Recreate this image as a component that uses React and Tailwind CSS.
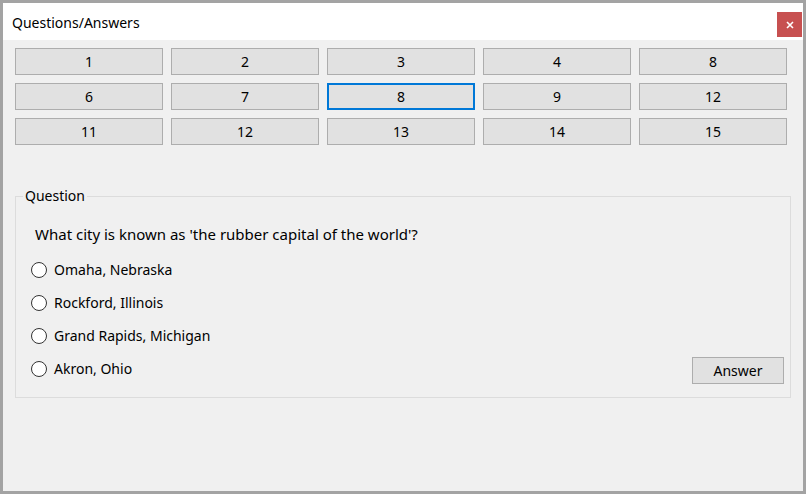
import { useState } from 'react'

const NUMBERS = [1, 2, 3, 4, 8, 6, 7, 8, 9, 12, 11, 12, 13, 14, 15]

const OPTIONS = ['Omaha, Nebraska', 'Rockford, Illinois', 'Grand Rapids, Michigan', 'Akron, Ohio']

export default function App() {
  const [selected, setSelected] = useState(7)
  const [choice, setChoice] = useState(null)

  return (
    <div className="w-[806px] h-[494px] border-[3px] border-[#a3a3a3] bg-[#f0f0f0] flex flex-col text-[#000] font-['Segoe_UI','Noto_Sans',sans-serif]">
      <div className="h-[37px] bg-white flex items-start justify-between">
        <div className="pl-[9px] pt-[10px] text-[14px] leading-[20px]">Questions/Answers</div>
        <button className="mt-[9px] mr-[1px] w-[25px] h-[25px] bg-[#c75050] text-white flex items-center justify-center">
          <svg width="8" height="8" viewBox="0 0 8 8">
            <path d="M1 1L7 7M7 1L1 7" stroke="white" strokeWidth="1.6" />
          </svg>
        </button>
      </div>

      <div className="flex-1 pl-[12px] pt-[8px]">
        <div className="grid grid-cols-[repeat(5,148px)] gap-[8px]">
          {NUMBERS.map((n, i) => (
            <button key={i} onClick={() => setSelected(i)}
              className={`h-[27px] bg-[#e1e1e1] text-[14px] leading-none ${
                selected === i ? 'border-2 border-[#0078d7]' : 'border border-[#adadad]'
              }`}>
              {n}
            </button>
          ))}
        </div>

        <fieldset className="mt-[42px] w-[776px] h-[211px] border border-[#dcdcdc] relative">
          <legend className="ml-[7px] px-[2px] text-[14px] leading-[18px]">Question</legend>
          <div className="pl-[19px] pt-[19px] text-[15px] leading-[20px]">
            What city is known as 'the rubber capital of the world'?
          </div>
          <div className="flex items-end justify-between pr-[6px]">
            <div className="flex flex-col pl-[15px] pt-[9px]">
              {OPTIONS.map((o, i) => (
                <label key={o} className="flex items-center h-[33px] text-[14px] cursor-pointer" onClick={() => setChoice(i)}>
                  <span className="w-[16px] h-[16px] rounded-full border border-[#333] bg-white flex items-center justify-center">
                    {choice === i && <span className="w-[8px] h-[8px] rounded-full bg-[#333]" />}
                  </span>
                  <span className="ml-[7px]">{o}</span>
                </label>
              ))}
            </div>
            <button className="mb-[1px] w-[92px] h-[27px] bg-[#e1e1e1] border border-[#adadad] text-[14px]">Answer</button>
          </div>
        </fieldset>
      </div>
    </div>
  )
}
